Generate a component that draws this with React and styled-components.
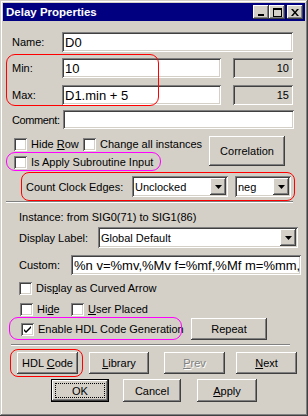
import React from "react";
import styled, { createGlobalStyle, css } from "styled-components";

const GlobalStyle = createGlobalStyle`
  html, body {
    margin: 0;
    padding: 0;
    background: #ffffff;
  }
  body {
    font-family: "Liberation Sans", Arial, sans-serif;
    font-size: 11px;
    color: #000;
  }
`;

const raised = css`
  box-shadow: inset -1px -1px #404040, inset 1px 1px #ffffff,
    inset -2px -2px #808080, inset 2px 2px #d4d0c8;
`;

const sunken = css`
  box-shadow: inset 1px 1px #808080, inset -1px -1px #ffffff,
    inset 2px 2px #404040, inset -2px -2px #d4d0c8;
`;

const Win = styled.div`
  width: 308px;
  height: 416px;
  box-sizing: border-box;
  padding: 3px;
  background: #d4d0c8;
  box-shadow: inset -1px -1px #404040, inset 1px 1px #d4d0c8,
    inset -2px -2px #808080, inset 2px 2px #ffffff;
  display: flex;
  flex-direction: column;
`;

const TitleBar = styled.div`
  height: 18px;
  flex: 0 0 18px;
  background: #000080;
  display: flex;
  align-items: center;
  padding: 0 2px 0 3px;
  color: #fff;
  font-weight: bold;
  font-size: 11.5px;
`;

const TitleText = styled.span`
  flex: 1;
`;

const TitleBtn = styled.div`
  width: 16px;
  height: 14px;
  margin-left: ${(p) => p.ml || 0}px;
  background: #d4d0c8;
  ${raised};
  display: flex;
  align-items: center;
  justify-content: center;
`;

const Content = styled.div`
  position: relative;
  flex: 1;
  display: flex;
  flex-direction: column;
`;

const Row = styled.div`
  display: flex;
  align-items: center;
  height: ${(p) => p.h}px;
  margin-top: ${(p) => p.mt}px;
  padding-left: ${(p) => p.pl}px;
`;

const Label = styled.span`
  width: ${(p) => p.w}px;
  flex: 0 0 auto;
  white-space: nowrap;
  letter-spacing: ${(p) => (p.tight ? "-0.4px" : "normal")};
`;

const Field = styled.div`
  box-sizing: border-box;
  width: ${(p) => p.w}px;
  height: 100%;
  margin-left: ${(p) => p.ml || 0}px;
  background: #fff;
  ${sunken};
  padding: 0 2px 0 3px;
  display: flex;
  align-items: center;
  font-size: 13px;
  white-space: nowrap;
  overflow: hidden;
`;

const ReadBox = styled(Field)`
  background: #d4d0c8;
  justify-content: flex-end;
  padding-right: 4px;
  font-size: 11px;
`;

const Select = styled(Field)`
  font-size: 11px;
  justify-content: space-between;
  padding-right: 2px;
`;

const DropBtn = styled.div`
  width: 16px;
  height: calc(100% - 4px);
  background: #d4d0c8;
  ${raised};
  display: flex;
  align-items: center;
  justify-content: center;
`;

const CheckArea = styled.div`
  display: flex;
  margin-top: ${(p) => p.mt}px;
  padding-left: ${(p) => p.pl}px;
`;

const CheckCol = styled.div`
  width: ${(p) => p.w}px;
  display: flex;
  flex-direction: column;
`;

const CheckRow = styled.div`
  display: flex;
  align-items: center;
  height: 16px;
  margin-top: ${(p) => p.mt || 0}px;
`;

const CheckItem = styled.div`
  display: flex;
  align-items: center;
  width: ${(p) => (p.w ? `${p.w}px` : "auto")};
  flex: 0 0 auto;
  white-space: nowrap;
`;

const Box = styled.div`
  box-sizing: border-box;
  width: 13px;
  height: 13px;
  background: #fff;
  ${sunken};
  margin-right: 4px;
  display: flex;
  align-items: center;
  justify-content: center;
`;

const Button = styled.div`
  box-sizing: border-box;
  width: ${(p) => p.w}px;
  height: ${(p) => p.h || 22}px;
  margin-left: ${(p) => p.ml || 0}px;
  background: #d4d0c8;
  ${raised};
  display: flex;
  align-items: center;
  justify-content: center;
  white-space: nowrap;
  color: ${(p) => (p.disabled ? "#808080" : "#000")};
  text-shadow: ${(p) => (p.disabled ? "1px 1px #ffffff" : "none")};
`;

const DefaultButton = styled(Button)`
  position: relative;
  border: 1px solid #000;
  &::after {
    content: "";
    position: absolute;
    inset: 3px;
    border: 1px dotted #000;
  }
`;

const Sep = styled.div`
  height: 0;
  margin-top: ${(p) => p.mt}px;
  margin-left: ${(p) => p.ml}px;
  width: ${(p) => p.w}px;
  border-top: 1px solid #808080;
  border-bottom: 1px solid #ffffff;
`;

const Mark = styled.div`
  position: absolute;
  box-sizing: border-box;
  left: ${(p) => p.x}px;
  top: ${(p) => p.y}px;
  width: ${(p) => p.w}px;
  height: ${(p) => p.h}px;
  border: 1px solid ${(p) => p.color};
  border-radius: ${(p) => p.r}px;
  pointer-events: none;
`;

const Arrow = () => (
  <svg width="7" height="4" viewBox="0 0 7 4">
    <path d="M0 0h7L3.5 4z" fill="#000" />
  </svg>
);

const Check = ({ checked, children, w }) => (
  <CheckItem w={w}>
    <Box>
      {checked && (
        <svg width="9" height="9" viewBox="0 0 9 9">
          <path d="M1 4l2 2 5-5v2L3 8 1 6z" fill="#000" />
        </svg>
      )}
    </Box>
    <span>{children}</span>
  </CheckItem>
);

const App = () => {
  return (
    <>
      <GlobalStyle />
      <Win>
        <TitleBar>
          <TitleText>Delay Properties</TitleText>
          <TitleBtn>
            <svg width="8" height="8" viewBox="0 0 8 8">
              <rect x="1" y="6" width="6" height="2" fill="#000" />
            </svg>
          </TitleBtn>
          <TitleBtn>
            <svg width="9" height="9" viewBox="0 0 9 9">
              <path d="M0 0h9v9H0z M1 2v6h7V2z" fill="#000" fillRule="evenodd" />
            </svg>
          </TitleBtn>
          <TitleBtn ml={2}>
            <svg width="8" height="7" viewBox="0 0 8 7">
              <path d="M0 0h2l2 2.5L6 0h2L5 3.5 8 7H6L4 4.5 2 7H0l3-3.5z" fill="#000" />
            </svg>
          </TitleBtn>
        </TitleBar>

        <Content>
          <Row h={20} mt={11} pl={9}>
            <Label w={50}>Name:</Label>
            <Field w={231}>D0</Field>
          </Row>
          <Row h={20} mt={6} pl={9}>
            <Label w={50}>Min:</Label>
            <Field w={159}>10</Field>
            <ReadBox w={60} ml={12}>10</ReadBox>
          </Row>
          <Row h={20} mt={7} pl={9}>
            <Label w={50}>Max:</Label>
            <Field w={159}>D1.min + 5</Field>
            <ReadBox w={60} ml={12}>15</ReadBox>
          </Row>
          <Row h={19} mt={5} pl={9}>
            <Label w={51} tight>
              Comment:
            </Label>
            <Field w={231}></Field>
          </Row>

          <CheckArea mt={7} pl={11}>
            <CheckCol w={195}>
              <CheckRow>
                <Check w={69}>
                  Hide <u>R</u>ow
                </Check>
                <Check>Change all instances</Check>
              </CheckRow>
              <CheckRow mt={2}>
                <Check>Is Apply Subroutine Input</Check>
              </CheckRow>
            </CheckCol>
            <Button w={76} h={30}>
              <span>Correlation</span>
            </Button>
          </CheckArea>

          <Row h={21} mt={6} pl={23}>
            <Label w={106}>Count Clock Edges:</Label>
            <Select w={96}>
              <span>Unclocked</span>
              <DropBtn>
                <Arrow />
              </DropBtn>
            </Select>
            <Select w={56} ml={7}>
              <span>neg</span>
              <DropBtn>
                <Arrow />
              </DropBtn>
            </Select>
          </Row>

          <Sep mt={4} ml={3} w={287} />

          <Row h={14} mt={7} pl={16}>
            <span>Instance: from SIG0(71) to SIG1(86)</span>
          </Row>
          <Row h={21} mt={3} pl={16}>
            <Label w={79}>Display Label:</Label>
            <Select w={200}>
              <span>Global Default</span>
              <DropBtn>
                <Arrow />
              </DropBtn>
            </Select>
          </Row>
          <Row h={20} mt={7} pl={16}>
            <Label w={52}>Custom:</Label>
            <Field w={230}>%n v=%mv,%Mv f=%mf,%Mf m=%mm,</Field>
          </Row>
          <Row h={16} mt={5} pl={16}>
            <Check>
              Dis<u>p</u>lay as Curved Arrow
            </Check>
          </Row>
          <Row h={16} mt={5} pl={17}>
            <Check w={51}>
              Hi<u>d</u>e
            </Check>
            <Check>
              <u>U</u>ser Placed
            </Check>
          </Row>
          <Row h={22} mt={1} pl={18}>
            <Check checked w={170}>
              Enable HDL Code Generation
            </Check>
            <Button w={76}>
              <span>Repeat</span>
            </Button>
          </Row>

          <Sep mt={4} ml={8} w={279} />

          <Row h={22} mt={6} pl={14}>
            <Button w={61}>
              <span>
                HDL <u>C</u>ode
              </span>
            </Button>
            <Button w={60} ml={11}>
              <span>
                <u>L</u>ibrary
              </span>
            </Button>
            <Button w={61} ml={15} disabled>
              <span>
                <u>P</u>rev
              </span>
            </Button>
            <Button w={61} ml={11}>
              <span>
                <u>N</u>ext
              </span>
            </Button>
          </Row>
          <Row h={23} mt={5} pl={48}>
            <DefaultButton w={58} h={23}>
              <span>OK</span>
            </DefaultButton>
            <Button w={58} h={23} ml={14}>
              <span>Cancel</span>
            </Button>
            <Button w={60} h={23} ml={16}>
              <span>
                <u>A</u>pply
              </span>
            </Button>
          </Row>

          <Mark color="#ff0000" x={3} y={33} w={153} h={52} r={9} />
          <Mark color="#ff00ff" x={3} y={131} w={155} h={19} r={9} />
          <Mark color="#ff0000" x={18} y={151} w={274} h={29} r={8} />
          <Mark color="#ff00ff" x={6} y={296} w={173} h={23} r={9} />
          <Mark color="#ff0000" x={7} y={328} w={73} h={28} r={8} />
        </Content>
      </Win>
    </>
  );
};

export default App;
